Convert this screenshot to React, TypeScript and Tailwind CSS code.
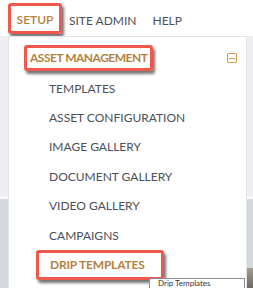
import { Fragment } from 'react'

const items = [
  'TEMPLATES',
  'ASSET CONFIGURATION',
  'IMAGE GALLERY',
  'DOCUMENT GALLERY',
  'VIDEO GALLERY',
  'CAMPAIGNS',
]

const callout = 'rounded-[3px] border-[3px] border-[#f1584d] shadow-[2px_3px_3px_rgba(0,0,0,0.55)]'

export default function App() {
  return (
    <div className="relative h-[288px] w-[253px] overflow-hidden whitespace-nowrap bg-white font-['Lato',sans-serif] text-[12px]">
      <header className="flex h-[36px] items-start pl-[8px] pt-[3px]">
        <div className={`flex h-[31px] w-[54px] items-center justify-center pt-[3px] ${callout}`}>
          <span className="font-semibold text-[#b4823f]">SETUP</span>
        </div>
        <nav className="ml-[7px] flex gap-[16px] pt-[9px] text-[#4b4f57]">
          <span>SITE ADMIN</span>
          <span>HELP</span>
        </nav>
      </header>

      <div className="flex h-[252px] flex-col">
        <div className="h-[160px] bg-[#eceef1]" />
        <div className="h-[3px] bg-[#f7f8f9]" />
        <div className="relative flex-1 bg-[#d5d8dc]">
          <div className="absolute bottom-0 right-0 h-[20px] w-[6px] bg-gradient-to-b from-[#a59d8f] to-[#6f6a60]" />
        </div>
      </div>

      <div className="absolute left-[8px] top-[36px] h-[260px] w-[239px] border border-[#e2e4e8] bg-white">
        <div className="flex items-center justify-between pr-[9px] pt-[8px]">
          <div className={`ml-[15px] flex h-[26px] items-center px-[3px] ${callout}`}>
            <span className="font-bold tracking-[-0.5px] text-[#b4823f]">ASSET MANAGEMENT</span>
          </div>
          <span className="flex h-[10px] w-[10px] items-center justify-center rounded-[1px] border border-[#d99a4e]">
            <span className="h-[1px] w-[6px] bg-[#d99a4e]" />
          </span>
        </div>
        <ul className="mt-[3px] pl-[40px] text-[#4b4f57]">
          {items.map((label) => (
            <Fragment key={label}>
              <li className="flex h-[29.4px] items-center">{label}</li>
            </Fragment>
          ))}
        </ul>
        <div className={`ml-[27px] flex h-[30px] w-[128px] items-center pl-[11px] ${callout}`}>
          <span className="font-bold tracking-[-0.2px] text-[#b4823f]">DRIP TEMPLATES</span>
        </div>
      </div>

      <div className="absolute left-[149px] top-[278px] h-[20px] w-[96px] border border-[#8a8d92] bg-white px-[8px] text-[8px] leading-[9px] text-[#333]">
        Drip Templates
      </div>
    </div>
  )
}
